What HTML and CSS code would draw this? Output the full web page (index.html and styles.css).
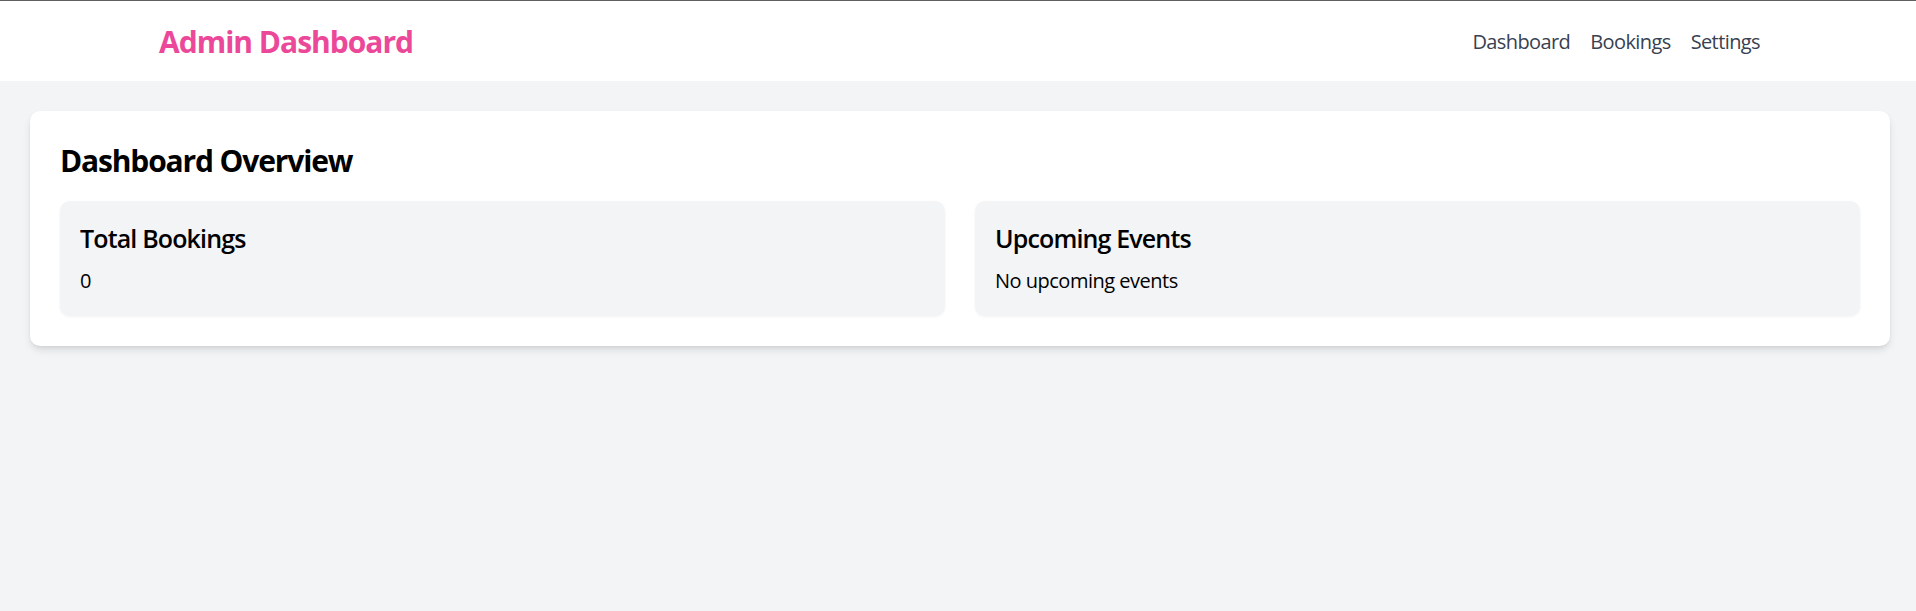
FILE: index.html
```html
<!DOCTYPE html>
<html lang="en">
<head>
<meta charset="utf-8">
<title>Admin Dashboard</title>
<link rel="stylesheet" href="styles.css">
</head>
<body>
<header class="topbar">
  <div class="topbar-inner">
    <h1 class="brand">Admin Dashboard</h1>
    <nav class="nav">
      <a href="#" class="nav-link">Dashboard</a>
      <a href="#" class="nav-link">Bookings</a>
      <a href="#" class="nav-link">Settings</a>
    </nav>
  </div>
</header>
<main class="main">
  <section class="card">
    <h2 class="card-title">Dashboard Overview</h2>
    <div class="stats">
      <div class="stat">
        <h3 class="stat-title">Total Bookings</h3>
        <p class="stat-value">0</p>
      </div>
      <div class="stat">
        <h3 class="stat-title">Upcoming Events</h3>
        <p class="stat-value">No upcoming events</p>
      </div>
    </div>
  </section>
</main>
</body>
</html>
```
FILE: styles.css
```css
* { box-sizing: border-box; }
html, body { margin: 0; padding: 0; }
body {
  background: #f3f4f6;
  font-family: "Open Sans", "Noto Sans", sans-serif;
  color: #000;
  min-height: 100vh;
}
.topbar {
  background: #fff;
  border-top: 1px solid #5e5e5e;
  height: 81px;
  padding: 0 156px 0 159px;
}
.topbar-inner {
  height: 80px;
  display: flex;
  align-items: center;
  justify-content: space-between;
}
.brand {
  margin: 0;
  padding-top: 2px;
  font-size: 30px;
  line-height: 40px;
  font-weight: 700;
  letter-spacing: -1px;
  color: #ec4899;
}
.nav {
  display: flex;
  gap: 20px;
  padding-top: 1px;
}
.nav-link {
  font-size: 20px;
  line-height: 30px;
  letter-spacing: -0.6px;
  color: #374151;
  text-decoration: none;
}
.main {
  padding: 30px 26px 30px 30px;
}
.card {
  background: #fff;
  border-radius: 10px;
  box-shadow: 0 5px 8px -1px rgba(0,0,0,0.1), 0 2px 5px -2px rgba(0,0,0,0.1);
  padding: 30px;
}
.card-title {
  margin: 0 0 20px;
  font-size: 30px;
  line-height: 40px;
  font-weight: 700;
  letter-spacing: -1.15px;
}
.stats {
  display: grid;
  grid-template-columns: 1fr 1fr;
  gap: 30px;
}
.stat {
  background: #f3f4f6;
  border-radius: 10px;
  padding: 20px;
  box-shadow: 0 1px 3px rgba(0,0,0,0.05);
}
.stat-title {
  margin: 0 0 10px;
  font-size: 25px;
  line-height: 35px;
  font-weight: 600;
  letter-spacing: -0.85px;
}
.stat-value {
  margin: 0;
  font-size: 20px;
  line-height: 30px;
  letter-spacing: -0.5px;
}
```
